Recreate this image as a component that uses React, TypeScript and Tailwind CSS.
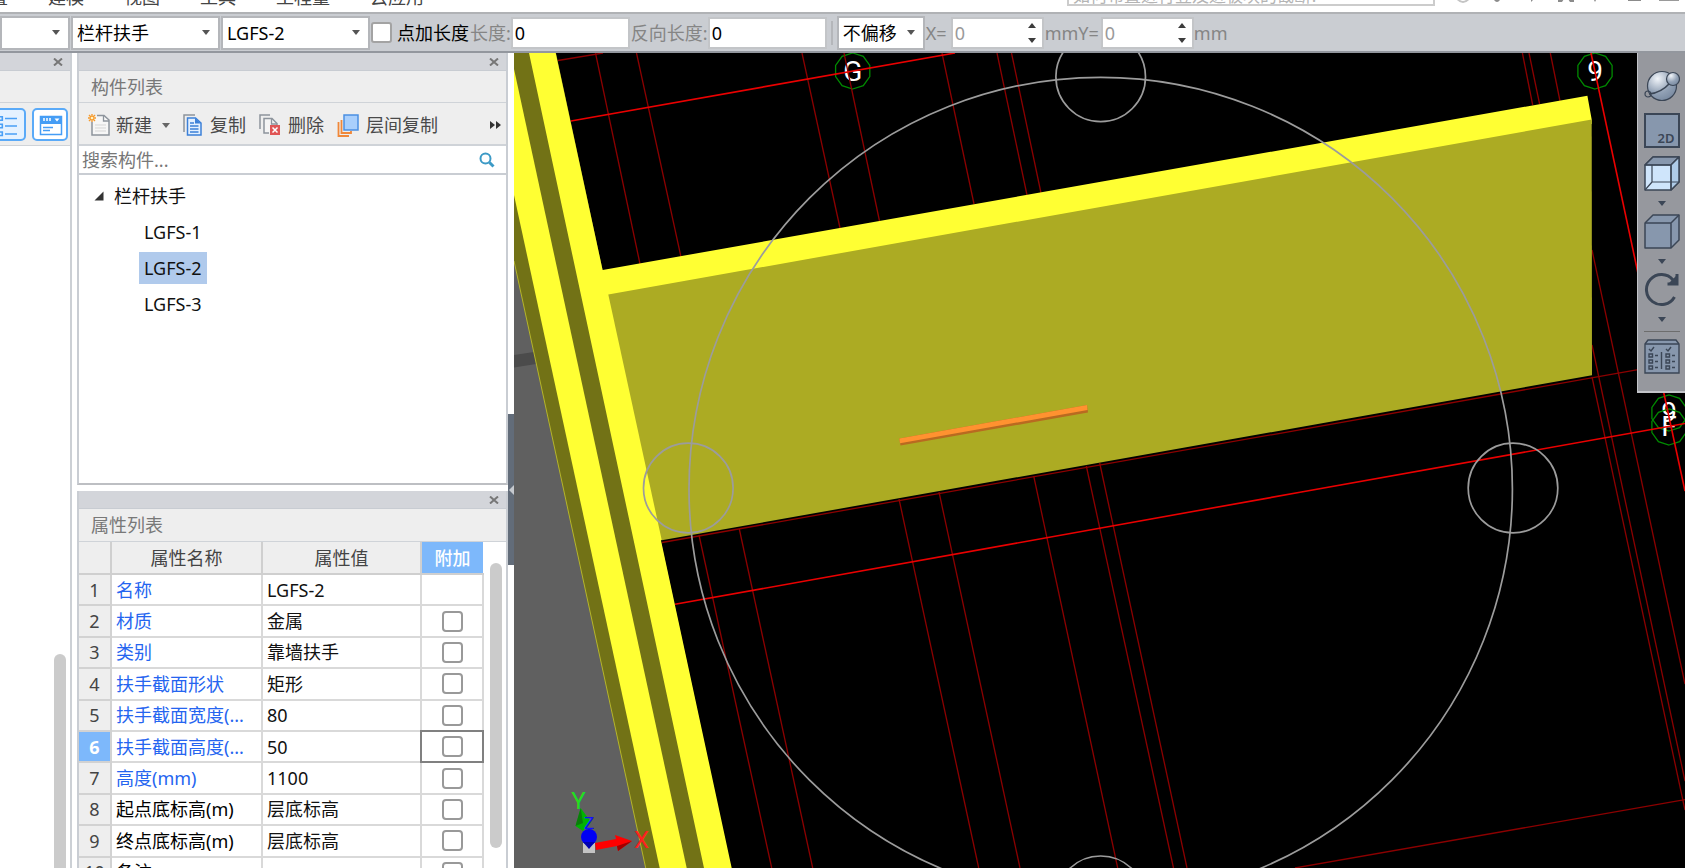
import React, { useState } from "react";

function Caret({ className = "" }: { className?: string }) {
  return (
    <svg viewBox="0 0 8 5" className={"h-[5px] w-2 shrink-0 " + className} aria-hidden="true">
      <path d="M0 0h8L4 5z" fill="currentColor" />
    </svg>
  );
}

function Combo({ label, options, className }: { label: string; options: string[]; className: string }) {
  return (
    <div className={"relative flex h-[34px] shrink-0 items-center border-2 border-[#b4b6ba] bg-white " + className}>
      <select aria-label={label} className="h-full w-full appearance-none bg-transparent pl-1 text-black outline-none">
        {options.map((o) => (
          <option key={o}>{o}</option>
        ))}
      </select>
      <Caret className="pointer-events-none absolute right-2 text-[#555]" />
    </div>
  );
}

function Spin({ id }: { id: string }) {
  return (
    <div className="flex h-8 w-[93px] shrink-0 items-center border-2 border-[#c3c5c8] bg-white pr-1">
      <input id={id} defaultValue="0" className="h-full w-full min-w-0 pl-0.5 text-[#9a9a9a] outline-none" />
      <div className="flex shrink-0 flex-col gap-[10px] px-0.5 text-[#3c3c3c]">
        <button type="button" aria-label="增加">
          <Caret className="block rotate-180" />
        </button>
        <button type="button" aria-label="减少">
          <Caret className="block" />
        </button>
      </div>
    </div>
  );
}

function MenuBar() {
  const items = ["建模", "视图", "工具", "工程量", "云应用"];
  return (
    <header className="flex h-3 shrink-0 items-end justify-between overflow-hidden bg-white text-[#444]">
      <nav className="flex items-end gap-10 pb-[5px]">
        <a href="#settings" className="-ml-16 leading-5">工程设置</a>
        {items.map((t) => (
          <a key={t} href={"#" + t} className="leading-5">{t}</a>
        ))}
      </nav>
      <div className="flex items-end gap-5 pb-1.5">
        <input
          aria-label="搜索"
          placeholder="如何布置进行竖及进板块的截断?"
          className="h-8 w-[368px] border-2 border-[#ccc] px-1 pt-2.5 text-[17px] leading-5 text-black outline-none placeholder:text-[#b4b4b4]"
        />
        <svg viewBox="0 0 230 10" className="h-[10px] w-[230px]" fill="#8b8b8b" aria-hidden="true">
          <path d="M0 0q8 12 16 0" fill="none" stroke="#c4c4c4" strokeWidth="2" />
          <path d="M39 0h6v4q-3 4-6 0zM70 0h12l-6 6v-3l-6-2zM103 0h16v6h-4l-2-3-4 0-2 3h-4zM137 0h6l-3 6zM173 0h13v5h-13z" />
          <path d="M205 0v4h18V0" fill="none" stroke="#9a9a9a" strokeWidth="2" />
        </svg>
      </div>
    </header>
  );
}

function OptionBar() {
  return (
    <div className="flex h-[41px] shrink-0 items-center overflow-hidden border-y-2 border-t-[#b0b2b5] border-b-[#93979e] bg-[#cacdd2] whitespace-nowrap text-[#858585]">
      <Combo label="类型" options={[""]} className="w-[70px]" />
      <Combo label="构件类型" options={["栏杆扶手"]} className="ml-px w-[149px]" />
      <Combo label="构件" options={["LGFS-2", "LGFS-1", "LGFS-3"]} className="ml-px w-[149px]" />
      <label className="ml-px flex shrink-0 items-center gap-[5px] text-black">
        <input type="checkbox" className="size-[21px] appearance-none rounded-[3px] border-2 border-[#a3a3a3] bg-white checked:bg-[#7db8fb]" />
        点加长度
      </label>
      <label htmlFor="len" className="ml-px shrink-0">长度:</label>
      <input id="len" defaultValue="0" className="h-8 w-[119px] shrink-0 border-2 border-[#c3c5c8] bg-white px-0.5 text-black outline-none" />
      <label htmlFor="rlen" className="ml-px shrink-0">反向长度:</label>
      <input id="rlen" defaultValue="0" className="h-8 w-[119px] shrink-0 border-2 border-[#c3c5c8] bg-white px-0.5 text-black outline-none" />
      <span className="mx-1 h-6 w-0.5 shrink-0 bg-[#b4b6ba]" />
      <Combo label="偏移方式" options={["不偏移"]} className="w-[88px]" />
      <label htmlFor="ox" className="w-[26px] shrink-0 pl-px">X=</label>
      <Spin id="ox" />
      <span className="ml-px shrink-0">mm</span>
      <label htmlFor="oy" className="mr-0.5 shrink-0">Y=</label>
      <Spin id="oy" />
      <span className="shrink-0">mm</span>
    </div>
  );
}

function DockHeader() {
  return (
    <div className="flex h-[18px] shrink-0 items-center justify-end border-b border-[#c8ccd2] bg-[#d3d5da] pr-[7px]">
      <button type="button" aria-label="关闭" className="text-[#777]">
        <svg viewBox="0 0 10 8" className="h-2 w-[10px]" fill="none" stroke="currentColor" strokeWidth="2">
          <path d="M1 0.500l8 7M9 0.500l-8 7" />
        </svg>
      </button>
    </div>
  );
}

function NavPanel() {
  return (
    <aside className="flex w-[72px] shrink-0 flex-col border-r-2 border-[#ccd0d5] bg-white">
      <DockHeader />
      <div className="h-8 shrink-0 border-b border-[#cfd3d8] bg-[#eee]" />
      <div className="flex h-[43px] shrink-0 items-center justify-end gap-1.5 overflow-hidden border-b border-[#cfd3d8] bg-[#eee] pr-0.5">
        <button type="button" aria-label="列表" className="h-[33px] w-9 shrink-0 rounded-[5px] border-2 border-[#5aaaf8] bg-[#e5f2ff]">
          <svg viewBox="0 0 32 29" className="h-[29px] w-8" fill="none" stroke="#4aa0f6" strokeWidth="1.600">
            <path d="M13 8.500h12M13 16h12M13 24h12" />
            <path d="M6.800 6.800h3.500v3.500h-3.500zM6.800 14.300h3.500v3.500h-3.500zM6.800 22h3.500v3.500h-3.500z" />
          </svg>
        </button>
        <button type="button" aria-label="卡片" className="h-[33px] w-9 shrink-0 rounded-[5px] border-2 border-[#5aaaf8] bg-white">
          <svg viewBox="0 0 32 29" className="h-[29px] w-8" fill="none">
            <path d="M6.500 6.500h21v18h-21z" stroke="#459df5" strokeWidth="1.500" />
            <path d="M6 6h22v8H6z" fill="#459df5" />
            <path d="M10 8v3M13 8v3M16 8v3" stroke="#fff" strokeWidth="1.500" />
            <path d="M20.500 8.500h5l-2.500 3z" fill="#fff" />
            <path d="M9 17.500h10M9 20.500h7" stroke="#459df5" strokeWidth="1.500" />
          </svg>
        </button>
      </div>
      <div className="flex grow items-end justify-end pr-1">
        <div className="h-[214px] w-3 rounded-t-full bg-[#cbcbcb]" />
      </div>
    </aside>
  );
}

function IconNew() {
  return (
    <svg viewBox="0 0 22 22" className="size-[22px]" fill="none">
      <path d="M4 8v13h17V6l-5-4.500H9" fill="#f6f6f6" stroke="#8d949c" strokeWidth="1.500" />
      <path d="M15.500 1.500V7H21" stroke="#8d949c" strokeWidth="1.300" />
      <path d="M7 11h11M7 14h11M7 17h11" stroke="#d5d5d5" />
      <path d="M4 0v8M0 4h8M1 1l6 6M7 1L1 7" stroke="#f79a2b" strokeWidth="1.400" />
      <circle cx="4" cy="4" r="1.300" fill="#fff3c4" />
    </svg>
  );
}
function IconCopy() {
  return (
    <svg viewBox="0 0 20 22" className="h-[22px] w-5" fill="none">
      <path d="M1 18V1h11" stroke="#8d949c" strokeWidth="1.500" />
      <path d="M4.500 4h8l5.500 5v12H4.500z" fill="#e3f0ff" stroke="#3c80d8" strokeWidth="1.500" />
      <path d="M12 4v5.500h6z" fill="#3c80d8" />
      <path d="M7 9h4M7 12h8.500M7 15h8.500M7 18h8.500" stroke="#3c80d8" strokeWidth="1.300" />
    </svg>
  );
}
function IconDelete() {
  return (
    <svg viewBox="0 0 22 22" className="size-[22px]" fill="none">
      <path d="M1 15V1h10" stroke="#8d949c" strokeWidth="1.500" />
      <path d="M10 19H5V4.500h8l5 5V12" fill="#f4f4f4" stroke="#8d949c" strokeWidth="1.500" />
      <path d="M12.500 4.500V10H18" stroke="#8d949c" strokeWidth="1.300" />
      <path d="M11 11h10v10H11z" fill="#e05555" />
      <path d="M13.500 13.500l5 5M18.500 13.500l-5 5" stroke="#fff" strokeWidth="1.500" />
    </svg>
  );
}
function IconLayers() {
  return (
    <svg viewBox="0 0 22 23" className="h-[23px] w-[22px]" fill="none">
      <path d="M1.500 8v14H12" stroke="#f0883a" strokeWidth="1.800" />
      <path d="M4.500 6v13H14v-2" stroke="#f0883a" strokeWidth="1.800" />
      <path d="M7 1h14v15H7z" fill="#a9cffc" stroke="#4b90e2" strokeWidth="1.500" />
    </svg>
  );
}

function ComponentPanel() {
  const [selected, setSelected] = useState("LGFS-2");
  return (
    <section className="flex h-[432px] shrink-0 flex-col border-x-2 border-b-2 border-x-[#c9cdd3] border-b-[#bdbfc3] bg-white">
      <DockHeader />
      <h2 className="flex h-8 shrink-0 items-center border-b border-[#cfd3d8] bg-[#eee] pl-3 text-[#787878]">构件列表</h2>
      <div className="flex h-[43px] shrink-0 items-center justify-between border-b-2 border-[#cfd3d8] bg-[#eee] pt-[3px] pr-[5px] pl-[9px] whitespace-nowrap text-[#4a4a4a]">
        <div className="flex items-center gap-[13px]">
          <button type="button" className="flex items-center gap-1.5"><IconNew />新建<Caret className="ml-1 text-[#666]" /></button>
          <button type="button" className="flex items-center gap-[7px]"><IconCopy />复制</button>
          <button type="button" className="flex items-center gap-[7px]"><IconDelete />删除</button>
          <button type="button" className="flex items-center gap-[7px]"><IconLayers />层间复制</button>
        </div>
        <button type="button" aria-label="更多">
          <svg viewBox="0 0 11 8" className="h-2 w-[11px]" fill="#333"><path d="M0 0l5 4-5 4zM6 0l5 4-5 4z" /></svg>
        </button>
      </div>
      <div className="flex h-[29px] shrink-0 items-center border-b-2 border-[#c9cdd3] pr-[11px]">
        <input aria-label="搜索构件" placeholder="搜索构件..." className="h-full min-w-0 grow pl-[3px] outline-none placeholder:text-[#777]" />
        <svg viewBox="0 0 16 16" className="size-4" fill="none" stroke="#3c9ac6">
          <circle cx="6.500" cy="6.500" r="5" strokeWidth="2" />
          <path d="M10.500 10.500l4 4" strokeWidth="3" />
        </svg>
      </div>
      <ul className="pt-[3px] pl-[15px] text-[#111]">
        <li>
          <div className="flex h-9 items-center gap-[10px]">
            <svg viewBox="0 0 10 10" className="size-[10px]"><path d="M9.500 0.500v9h-9z" fill="#333" /></svg>
            栏杆扶手
          </div>
          <ul className="pl-[45px]">
            {["LGFS-1", "LGFS-2", "LGFS-3"].map((n) => (
              <li key={n} className="flex h-9 items-center">
                <button type="button" onClick={() => setSelected(n)} className={"h-8 px-[5px] " + (n === selected ? "bg-[#b0caec]" : "")}>
                  {n}
                </button>
              </li>
            ))}
          </ul>
        </li>
      </ul>
    </section>
  );
}

const ROWS: [string, string, boolean][] = [
  ["名称", "LGFS-2", true],
  ["材质", "金属", true],
  ["类别", "靠墙扶手", true],
  ["扶手截面形状", "矩形", true],
  ["扶手截面宽度(...", "80", true],
  ["扶手截面高度(...", "50", true],
  ["高度(mm)", "1100", true],
  ["起点底标高(m)", "层底标高", false],
  ["终点底标高(m)", "层底标高", false],
  ["备注", "", false],
];

function PropertyPanel() {
  return (
    <section className="mt-1.5 flex min-h-0 grow flex-col overflow-hidden border-x-2 border-[#c9cdd3] bg-white">
      <DockHeader />
      <h2 className="flex h-[33px] shrink-0 items-center border-b border-[#cfd3d8] bg-[#eee] pl-3 text-[#787878]">属性列表</h2>
      <div className="flex items-start justify-between">
        <table className="h-[347px] w-[404px] table-fixed border-collapse whitespace-nowrap">
          <colgroup>
            <col className="w-8" />
            <col className="w-[151px]" />
            <col className="w-[159px]" />
            <col className="w-[62px]" />
          </colgroup>
          <thead>
            <tr className="h-8 bg-[#eee] text-[#444]">
              <th className="border-r-2 border-b-2 border-[#cfcfcf]" />
              <th className="border-r-2 border-b-2 border-[#cfcfcf] p-0 font-normal">属性名称</th>
              <th className="border-r-2 border-b-2 border-[#cfcfcf] p-0 font-normal">属性值</th>
              <th className="border-b-2 border-[#cfcfcf] bg-[#7db8fb] p-0 font-medium text-white">附加</th>
            </tr>
          </thead>
          <tbody>
            {ROWS.map(([name, value, blue], i) => (
              <tr key={name}>
                <th className={"border-r-2 border-b-2 border-[#d2d2d2] p-0 " + (i === 5 ? "bg-[#7db8fb] font-bold text-white" : "bg-[#eee] font-normal text-[#444]")}>{i + 1}</th>
                <td className={"border-r-2 border-b-2 border-[#d9d9d9] p-0 pl-1 " + (blue ? "text-[#2565f0]" : "text-black")}>{name}</td>
                <td className="border-r-2 border-b-2 border-[#d9d9d9] p-0 pl-1 text-[#111]">{value}</td>
                <td className={"border-r-2 border-b-2 border-[#d9d9d9] p-0 " + (i === 5 ? "outline-2 -outline-offset-1 outline-[#808080]" : "")}>
                  {i > 0 && (
                    <input
                      type="checkbox"
                      aria-label={name + " 附加"}
                      className="mx-auto block size-[21px] appearance-none rounded-[4px] border-2 border-[#999] bg-white checked:bg-[#7db8fb]"
                    />
                  )}
                </td>
              </tr>
            ))}
          </tbody>
        </table>
        <div className="mt-[21px] mr-1 h-[285px] w-3 rounded-full bg-[#cbcbcb]" />
      </div>
    </section>
  );
}

const DIM_LINES: number[][] = [
  [558, 60.5, 603, 53],
  [595.5, 53, 640, 264],
  [636.5, 53, 681, 257],
  [802, 53, 840, 228],
  [844, 53, 879.5, 221],
  [942, 53, 974, 204],
  [997, 53, 1027, 195],
  [1011.5, 53, 1041, 193],
  [1522.4, 53, 1532.7, 105],
  [1529, 53, 1539.6, 104],
  [1550.3, 53, 1560, 101],
  [699, 535, 771.7, 868],
  [739.3, 529, 812.7, 868],
  [899, 499, 978.7, 868],
  [939, 492, 1020, 868],
  [1033.7, 476, 1117.7, 868],
  [1086.3, 466, 1173.5, 868],
  [1099.7, 463, 1187, 868],
  [662, 542.5, 1280, 433.3],
  [1280, 433.3, 1638, 369.6],
  [1592, 250, 1685, 684],
  [1592, 345, 1685, 781],
  [1592, 377, 1685, 810],
  [1295, 868, 1685, 799.6],
];
const BRIGHT_LINES: number[][] = [
  [571, 121, 955, 53],
  [675, 604.3, 1300, 492.3],
  [1300, 492.3, 1685, 423.5],
  [1591, 53, 1637.3, 270],
  [1637.3, 270, 1685, 491],
];

function Bubble({ x, y, label, dy = 10 }: { x: number; y: number; label: string; dy?: number }) {
  const pts = Array.from({ length: 10 }, (_, i) => {
    const a = (i * Math.PI) / 5;
    return (x + 18 * Math.sin(a)).toFixed(1) + "," + (y + 18 * Math.cos(a)).toFixed(1);
  }).join(" ");
  return (
    <g>
      <polygon points={pts} fill="none" stroke="#008a00" strokeWidth="1.300" />
      <text x={x} y={y + dy} textAnchor="middle" fontSize="28" fill="#fff" className="[font-family:Roboto,sans-serif]">{label}</text>
    </g>
  );
}

function Viewport() {
  return (
    <svg viewBox="514 53 1171 815" preserveAspectRatio="xMinYMin slice" className="absolute inset-0 size-full bg-black" role="img" aria-label="三维视图">
      <polygon points="514,255 514,868 650,868" fill="#606060" />
      <polygon points="514,355 534,352 536,364 514,367.500" fill="#4b4b4b" />
      <Bubble x={852.7} y={71} label="G" />
      <Bubble x={1595} y={71} label="9" />
      <Bubble x={1669} y={413} label="9" dy={9} />
      <Bubble x={1669} y={427} label="F" dy={9} />
      <g stroke="#8c0000" strokeWidth="1.300">
        {DIM_LINES.map((l, i) => <line key={i} x1={l[0]} y1={l[1]} x2={l[2]} y2={l[3]} />)}
      </g>
      <g stroke="#ea0000" strokeWidth="1.600">
        {BRIGHT_LINES.map((l, i) => <line key={i} x1={l[0]} y1={l[1]} x2={l[2]} y2={l[3]} />)}
      </g>
      <polygon points="514,53 529,53 556,53 731,868 645.700,868 514,261" fill="#727216" />
      <path d="M514 261L645.700 868" stroke="#b5b52a" />
      <polygon points="514,69 686.700,868 659.700,868 514,195" fill="#ffff33" />
      <polygon points="529,53 555.700,53 602.600,270 1587.400,95.700 1591.700,119.500 1591.700,124 613,299 664,538 661,540.500 731.700,868 704,868" fill="#ffff33" />
      <polygon points="608.300,294.500 1591.700,119.500 1592,375.300 661.800,540.300" fill="#acab23" />
      <polygon points="899.300,438.500 1087,405 1088,412.500 900.500,445.500" fill="#b96a20" />
      <polygon points="899.300,438.500 1087,405 1087.500,410 900,443.300" fill="#ff9230" />
      <g fill="none" stroke="#9c9c9c" strokeWidth="1.700">
        <circle cx="1100.700" cy="489" r="411.700" />
        <circle cx="688.300" cy="488" r="44.800" />
        <circle cx="1513" cy="488" r="44.800" />
        <circle cx="1100.700" cy="76.800" r="44.800" />
        <circle cx="1100.700" cy="900.800" r="44.800" />
      </g>
      <g className="[font-family:Roboto,sans-serif]">
        <polygon points="580.700,808 591,822 583,831 575.500,826" fill="#00b400" />
        <polygon points="580.700,808 575.500,826 583,823" fill="#0a7d0a" />
        <rect x="583" y="842" width="12" height="11" fill="#c4c4c4" />
        <polygon points="595,843 616,839 615,835 632,841 618,851 617,846 596,850" fill="#f00" />
        <polygon points="617,846 632,841 618,851" fill="#a00000" />
        <text x="584" y="829" fontSize="17" fill="#1010ff">Z</text>
        <circle cx="589" cy="837" r="8" fill="#0000f5" />
        <polygon points="583,842 595,842 589,849" fill="#0000b0" />
        <text x="578.500" y="809" fontSize="24" textAnchor="middle" fill="#20e020">Y</text>
        <text x="641.500" y="848" fontSize="24" textAnchor="middle" fill="#ff2020">X</text>
      </g>
    </svg>
  );
}

function ViewTools() {
  const ink = "#3b4656";
  const steel = "#8797ad";
  return (
    <div className="absolute top-0 right-0 flex w-12 flex-col items-center border-b-2 border-l border-[#c3c4c9] bg-[#96989e] pt-[15px] pb-[17px] text-[#3b4656]">
      <button type="button" aria-label="动态观察">
        <svg viewBox="0 0 36 34" className="block h-[34px] w-9" fill="none">
          <defs>
            <radialGradient id="ball" cx="0.35" cy="0.25" r="0.8">
              <stop offset="0" stopColor="#f1f5fa" />
              <stop offset="0.600" stopColor="#93a2b6" />
              <stop offset="1" stopColor="#7889a0" />
            </radialGradient>
          </defs>
          <circle cx="18" cy="18" r="14.500" fill="url(#ball)" stroke={ink} strokeWidth="1.200" />
          <path d="M5 26Q17 25 26 15" stroke={ink} strokeWidth="1.600" />
          <circle cx="29" cy="11" r="6.500" fill="url(#ball)" stroke={ink} strokeWidth="1.200" />
          <circle cx="4" cy="26" r="3" stroke={ink} strokeWidth="1.200" />
        </svg>
      </button>
      <button type="button" className="mt-[11px] flex h-[35px] w-9 items-end justify-end border-2 border-[#3b4656] bg-[#8797ad] pr-[3px] text-[13px] leading-4 font-semibold">2D</button>
      <button type="button" aria-label="线框" className="mt-2">
        <svg viewBox="0 0 36 35" className="block h-[35px] w-9" stroke={ink} strokeWidth="1.500" strokeLinejoin="round">
          <path d="M1 9L9 1h26v25l-8 8H1z" fill="#cfe5fb" />
          <path d="M1 9L9 1h26l-8 8z" fill={steel} />
          <path d="M27 9v25l8-8V1z" fill="#aecbe8" />
          <path d="M1 9h26v25M8 9v17h27M8 26l-7 8" fill="none" strokeWidth="1.200" />
        </svg>
      </button>
      <Caret className="mt-[10px]" />
      <button type="button" aria-label="实体" className="mt-2">
        <svg viewBox="0 0 36 35" className="block h-[35px] w-9" stroke={ink} strokeWidth="1.500" strokeLinejoin="round" fill={steel}>
          <path d="M1 9L9 1h26v25l-8 8H1z" />
          <path d="M1 9h26v25M27 9l8-8" fill="none" />
        </svg>
      </button>
      <Caret className="mt-[10px]" />
      <button type="button" aria-label="旋转" className="mt-2">
        <svg viewBox="0 0 36 35" className="block h-[35px] w-9" fill="none" stroke={ink} strokeWidth="3">
          <path d="M30.500 25A15 15 0 1 1 29 8" />
          <path d="M33 2v10H23.500" />
          <path d="M33 12l-8-1 7-7z" fill={ink} stroke="none" />
        </svg>
      </button>
      <Caret className="mt-[10px]" />
      <hr className="mt-[9px] w-9 border-t border-[#6d6d6d]" />
      <button type="button" aria-label="显示设置" className="mt-1.5">
        <svg viewBox="0 0 36 36" className="block size-9" fill="none" stroke={ink} strokeWidth="1.400">
          <path d="M1 6l3-4h28l3 4v29H1z" fill={steel} />
          <path d="M1 6h34M17.500 14v17" />
          <path d="M5 11l2 2 3-4M22 11l2 2 3-4" />
          <path d="M5 16h3.500v3H5zM5 22h3.500v3H5zM5 28h3.500v3H5zM22 16h3.500v3H22zM22 22h3.500v3H22zM22 28h3.500v3H22z" />
          <path d="M11 17.500h3M11 23.500h3M11 29.500h3M28 17.500h3M28 23.500h3M28 29.500h3" />
        </svg>
      </button>
    </div>
  );
}

export default function App() {
  return (
    <div className="flex h-screen flex-col overflow-hidden bg-white text-lg leading-6 [font-family:'Noto_Sans','Noto_Sans_CJK_SC',sans-serif]">
      <MenuBar />
      <OptionBar />
      <main className="flex min-h-0 grow">
        <NavPanel />
        <div className="ml-[5px] flex w-[431px] shrink-0 flex-col">
          <ComponentPanel />
          <PropertyPanel />
        </div>
        <div className="flex w-1.5 shrink-0 flex-col pt-[361px]">
          <button type="button" aria-label="收起面板" className="flex h-[151px] w-full items-center justify-end bg-[#626c79]">
            <svg viewBox="0 0 5 10" className="h-[10px] w-[5px]"><path d="M5 0v10L0 5z" fill="#c5c9cf" /></svg>
          </button>
        </div>
        <div className="relative min-w-0 grow overflow-hidden">
          <Viewport />
          <ViewTools />
        </div>
      </main>
    </div>
  );
}
